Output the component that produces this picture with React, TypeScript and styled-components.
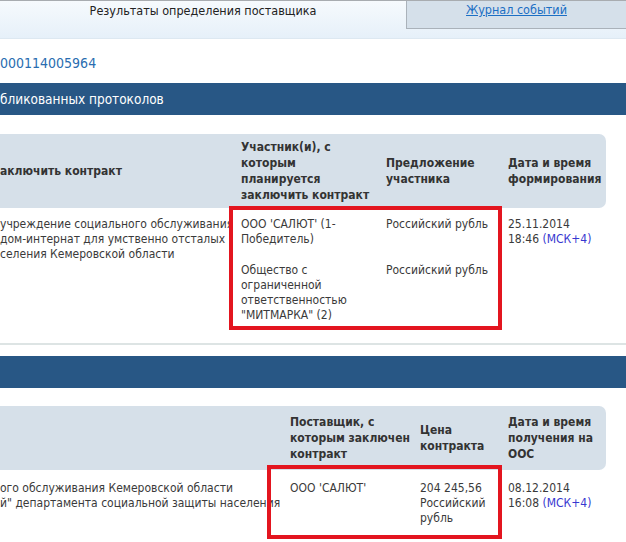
import React from 'react'
import styled, { createGlobalStyle } from 'styled-components'

const GlobalStyle = createGlobalStyle`
  html, body {
    margin: 0;
    padding: 0;
    background: #fff;
    overflow: hidden;
  }
  body {
    font-family: "DejaVu Sans Condensed", "DejaVu Sans", sans-serif;
    font-size: 12px;
    color: #333;
  }
`

const Page = styled.div`
  width: 626px;
  height: 542px;
  overflow: hidden;
`

const TabBar = styled.div`
  display: flex;
  height: 37px;
  border-top: 1px solid #a8acb0;
  border-bottom: 1px solid #dde8f1;
  background: linear-gradient(#f6fafd, #e6f0f9);
`

const ActiveTab = styled.div`
  width: 406px;
  text-align: center;
  padding-top: 2px;
  color: #222;
  font-size: 12.5px;
`

const Tab = styled.div`
  flex: 1;
  height: 26px;
  background: #d5e0ea;
  border-left: 1px solid #aab2ba;
  border-bottom: 1px solid #aab2ba;
  text-align: center;
  padding-top: 1px;
`

const TabLink = styled.a`
  color: #1c6fc4;
  text-decoration: underline;
  font-size: 12.5px;
`

const RegNumber = styled.a`
  display: block;
  margin-top: 16px;
  color: #2a6db0;
  font-size: 14px;
  line-height: 16px;
  text-decoration: none;
`

const SectionBar = styled.div<{ $top: number }>`
  height: 32px;
  margin-top: ${(p) => p.$top}px;
  background: #285785;
  color: #fff;
  font-size: 13.5px;
  display: flex;
  align-items: center;
`

const TableBox = styled.div<{ $top: number }>`
  position: relative;
  margin-top: ${(p) => p.$top}px;
`

const HeadRow = styled.div<{ $cols: string; $pad: number }>`
  display: grid;
  grid-template-columns: ${(p) => p.$cols};
  width: 606px;
  align-items: center;
  padding: ${(p) => p.$pad}px 0;
  background: #d6e0e9;
  border-radius: 0 7px 7px 0;
  font-weight: bold;
  font-size: 12px;
  line-height: 16px;
  color: #333;
`

const BodyRow = styled.div<{ $cols: string }>`
  display: grid;
  grid-template-columns: ${(p) => p.$cols};
  width: 606px;
  line-height: 15px;
  color: #3a3a3a;
`

const Cell = styled.div<{ $pt?: number; $span?: number }>`
  padding-top: ${(p) => p.$pt ?? 0}px;
  grid-row: ${(p) => (p.$span ? `span ${p.$span}` : 'auto')};
  white-space: nowrap;
`

const Zone = styled.span`
  color: #3737d0;
`

const Divider = styled.div`
  margin-top: 20px;
  height: 2px;
  background: #dde4e4;
`

const Highlight = styled.div`
  position: absolute;
  border: 4px solid #e3151f;
  box-sizing: border-box;
  pointer-events: none;
`

const cols1 = '241px 145px 122px 98px'
const cols2 = '290px 130px 88px 98px'

export default function App() {
  return (
    <Page>
      <GlobalStyle />
      <TabBar>
        <ActiveTab>Результаты определения поставщика</ActiveTab>
        <Tab>
          <TabLink href="#">Журнал событий</TabLink>
        </Tab>
      </TabBar>

      <RegNumber href="#">000114005964</RegNumber>

      <SectionBar $top={12}>бликованных протоколов</SectionBar>

      <TableBox $top={19}>
        <HeadRow $cols={cols1} $pad={5}>
          <Cell>аключить контракт</Cell>
          <Cell>
            Участник(и), с<br />
            которым<br />
            планируется<br />
            заключить контракт
          </Cell>
          <Cell>
            Предложение<br />
            участника
          </Cell>
          <Cell>
            Дата и время<br />
            формирования
          </Cell>
        </HeadRow>
        <BodyRow $cols={cols1}>
          <Cell $pt={9} $span={2}>
            учреждение социального обслуживания<br />
            дом-интернат для умственно отсталых<br />
            селения Кемеровской области
          </Cell>
          <Cell $pt={9}>
            ООО 'САЛЮТ' (1-<br />
            Победитель)
          </Cell>
          <Cell $pt={9}>Российский рубль</Cell>
          <Cell $pt={9} $span={2}>
            25.11.2014<br />
            18:46 <Zone>(МСК+4)</Zone>
          </Cell>
          <Cell $pt={16}>
            Общество с<br />
            ограниченной<br />
            ответственностью<br />
            "МИТМАРКА" (2)
          </Cell>
          <Cell $pt={16}>Российский рубль</Cell>
        </BodyRow>
        <Highlight style={{ left: 229, top: 72, width: 273, height: 124 }} />
      </TableBox>

      <Divider />

      <SectionBar $top={11}>{'\u00a0'}</SectionBar>

      <TableBox $top={18}>
        <HeadRow $cols={cols2} $pad={8}>
          <Cell />
          <Cell>
            Поставщик, с<br />
            которым заключен<br />
            контракт
          </Cell>
          <Cell>
            Цена<br />
            контракта
          </Cell>
          <Cell>
            Дата и время<br />
            получения на<br />
            ООС
          </Cell>
        </HeadRow>
        <BodyRow $cols={cols2}>
          <Cell $pt={11}>
            ого обслуживания Кемеровской области<br />
            й" департамента социальной защиты населения
          </Cell>
          <Cell $pt={11}>ООО 'САЛЮТ'</Cell>
          <Cell $pt={11}>
            204 245,56<br />
            Российский<br />
            рубль
          </Cell>
          <Cell $pt={11}>
            08.12.2014<br />
            16:08 <Zone>(МСК+4)</Zone>
          </Cell>
        </BodyRow>
        <Highlight style={{ left: 267, top: 59, width: 235, height: 74 }} />
      </TableBox>
    </Page>
  )
}
